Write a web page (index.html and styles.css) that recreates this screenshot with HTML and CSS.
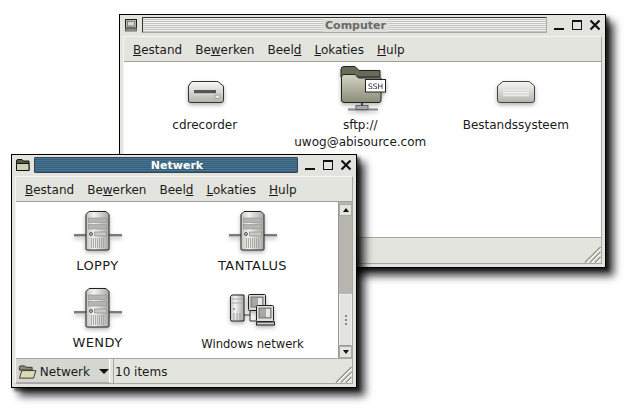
FILE: index.html
```html
<!DOCTYPE html>
<html>
<head>
<meta charset="utf-8">
<title>Nautilus</title>
<link rel="stylesheet" href="styles.css">
</head>
<body>
<svg class="defs" width="0" height="0">
  <defs>
    <linearGradient id="metal" x1="0" y1="0" x2="0" y2="1"><stop offset="0" stop-color="#f8f8f6"/><stop offset="1" stop-color="#b4b4ac"/></linearGradient>
    <linearGradient id="tower" x1="0" y1="0" x2="1" y2="0"><stop offset="0" stop-color="#c4c4c0"/><stop offset=".35" stop-color="#f2f2f0"/><stop offset="1" stop-color="#a8a8a4"/></linearGradient>
    <linearGradient id="folder" x1="0" y1="0" x2="0" y2="1"><stop offset="0" stop-color="#d4d4c4"/><stop offset="1" stop-color="#8c8c78"/></linearGradient>
    <symbol id="server" viewBox="0 0 48 48">
      <path d="M0 28H12M35 28H48" stroke="#555" stroke-width="1.500"/>
      <path d="M0 29.500H12M35 29.500H48" stroke="#bbb" stroke-width="1"/>
      <path d="M15 4.500H32L35 7.500V42Q35 43 34 43H13Q12 43 12 42V7.500Z" fill="url(#tower)" stroke="#222"/>
      <rect x="14.500" y="11" width="18" height="4.500" fill="#b4b4b0" stroke="#909090" stroke-width=".6"/>
      <rect x="14.500" y="17.500" width="18" height="4.500" fill="#b4b4b0" stroke="#909090" stroke-width=".6"/>
      <circle cx="17" cy="27" r="1.500" fill="#ccc" stroke="#333" stroke-width=".8"/>
      <rect x="20.500" y="25" width="12" height="4" fill="#c8c8c4" stroke="#808080" stroke-width=".6"/>
      <path d="M17.500 31V41M19.500 31V41M21.500 31V41M23.500 31V41M25.500 31V41M27.500 31V41M29.500 31V41" stroke="#a8a8a4"/>
    </symbol>
  </defs>
</svg>

<section class="window back">
  <header class="titlebar">
    <svg class="wm-icon" width="14" height="14" viewBox="0 0 14 14"><rect x="1.500" y="1.500" width="11" height="8.500" fill="#b8b8b0" stroke="#222"/><rect x="3.500" y="3.500" width="7" height="4.500" fill="#d8d8d0" stroke="#666" stroke-width=".7"/><rect x="1.500" y="11" width="11" height="2" fill="#bbb" stroke="#333" stroke-width=".7"/></svg>
    <div class="title plain"><span>Computer</span></div>
    <div class="wm-buttons">
      <svg width="12" height="12" viewBox="0 0 12 12"><rect x="1" y="9" width="10" height="2" fill="#111"/></svg>
      <svg width="12" height="12" viewBox="0 0 12 12"><rect x="1.500" y="1.500" width="9" height="9" fill="none" stroke="#111"/><rect x="1" y="1" width="10" height="2" fill="#111"/></svg>
      <svg width="12" height="12" viewBox="0 0 12 12"><path d="M1.500 1.500L10.500 10.500M10.500 1.500L1.500 10.500" stroke="#111" stroke-width="2.200"/></svg>
    </div>
  </header>
  <div class="frame">
    <nav class="menubar">
      <span><u>B</u>estand</span><span>Be<u>w</u>erken</span><span>Beel<u>d</u></span><span><u>L</u>okaties</span><span><u>H</u>ulp</span>
    </nav>
    <main class="canvas three">
      <figure class="item">
        <svg class="icon" width="48" height="48" viewBox="0 0 48 48"><path d="M10 17.500Q10 16.500 12 16.500H36Q38 16.500 38.500 18L42.500 21V35Q42.500 37.500 40 37.500H9Q7.500 37.500 7.500 35V21Z" fill="url(#metal)" stroke="#333"/><rect x="13" y="25" width="22" height="3.500" fill="#555"/><rect x="13" y="28.500" width="22" height="1" fill="#ddd"/><rect x="34" y="30" width="5" height="3.500" rx="1" fill="#e8e8e8" stroke="#777" stroke-width=".6"/></svg>
        <figcaption>cdrecorder</figcaption>
      </figure>
      <figure class="item">
        <svg class="icon" width="48" height="48" viewBox="0 0 48 48"><path d="M5 4.500Q5 1.500 8 1.500H19L23 5.500H44V12H5Z" fill="#6a6a58" stroke="#222"/><path d="M5.500 12Q5.500 9.500 8 9.500H19L22.500 13H45V35Q45 37.500 43 37.500H8Q5.500 37.500 5.500 35Z" fill="url(#folder)" stroke="#222"/><path d="M26 38V42" stroke="#444" stroke-width="2"/><path d="M12 44.500H42" stroke="#888" stroke-width="2"/><rect x="20" y="40.500" width="12" height="4" fill="#aaa" stroke="#444" stroke-width=".7"/><rect x="29.500" y="14.500" width="20" height="12.500" fill="#fff" stroke="#222"/><text x="39.500" y="23.800" class="ssh">SSH</text></svg>
        <figcaption>sftp://<br>uwog@abisource.com</figcaption>
      </figure>
      <figure class="item">
        <svg class="icon" width="48" height="48" viewBox="0 0 48 48"><path d="M11 16.500H37L42.500 21V35Q42.500 37.500 40 37.500H8Q5.500 37.500 5.500 35V21Z" fill="url(#metal)" stroke="#444"/><rect x="11" y="23.500" width="26" height="8" fill="#d8d8d4"/><path d="M11 25H37M11 27.500H37M11 30H37" stroke="#f4f4f2"/></svg>
        <figcaption>Bestandssysteem</figcaption>
      </figure>
    </main>
    <footer class="statusbar empty">
      <svg class="grip" width="17" height="17" viewBox="0 0 17 17"><path d="M1 16.500L16.500 1M6 16.500L16.500 6M11 16.500L16.500 11" stroke="#96968e" stroke-width="1.500"/><path d="M2.500 16.500L16.500 2.500M7.500 16.500L16.500 7.500M12.500 16.500L16.500 12.500" stroke="#fff"/></svg>
    </footer>
  </div>
</section>

<section class="window front">
  <header class="titlebar">
    <svg class="wm-icon" width="14" height="14" viewBox="0 0 14 14"><path d="M.5 3Q.5 1.500 2 1.500H6L7.500 3H13V12.500H.5Z" fill="#5a5a48" stroke="#111"/><path d="M.5 5.500H13V12.500H.5Z" fill="#cfcfb4" stroke="#111"/></svg>
    <div class="title active"><span>Netwerk</span></div>
    <div class="wm-buttons">
      <svg width="12" height="12" viewBox="0 0 12 12"><rect x="1" y="9" width="10" height="2" fill="#111"/></svg>
      <svg width="12" height="12" viewBox="0 0 12 12"><rect x="1.500" y="1.500" width="9" height="9" fill="none" stroke="#111"/><rect x="1" y="1" width="10" height="2" fill="#111"/></svg>
      <svg width="12" height="12" viewBox="0 0 12 12"><path d="M1.500 1.500L10.500 10.500M10.500 1.500L1.500 10.500" stroke="#111" stroke-width="2.200"/></svg>
    </div>
  </header>
  <div class="frame">
    <nav class="menubar">
      <span><u>B</u>estand</span><span>Be<u>w</u>erken</span><span>Beel<u>d</u></span><span><u>L</u>okaties</span><span><u>H</u>ulp</span>
    </nav>
    <div class="content-row">
      <main class="canvas two">
        <figure class="item"><svg class="icon" width="48" height="48"><use href="#server"/></svg><figcaption class="caps">LOPPY</figcaption></figure>
        <figure class="item"><svg class="icon" width="48" height="48"><use href="#server"/></svg><figcaption class="caps">TANTALUS</figcaption></figure>
        <figure class="item"><svg class="icon" width="48" height="48"><use href="#server"/></svg><figcaption class="caps">WENDY</figcaption></figure>
        <figure class="item">
          <svg class="icon" width="48" height="48" viewBox="0 0 48 48"><path d="M3 11H15V37H3Q1.500 37 1.500 35.500V12.500Z" fill="url(#tower)" stroke="#222"/><path d="M3 15H14M3 19H14" stroke="#aaa"/><circle cx="5" cy="25" r="1" fill="#888"/><path d="M5 29V36M8 29V36M11 29V36" stroke="#999"/><path d="M15 31H21M21 27V37H27" stroke="#333" fill="none"/><rect x="19.500" y="10.500" width="17" height="16" rx="1" fill="#d8d8d4" stroke="#222"/><rect x="22" y="13" width="12" height="10" fill="#a8a8a0" stroke="#555" stroke-width=".7"/><path d="M29 14H33V22H29Z" fill="#e8e8e8"/><rect x="27.500" y="21.500" width="17" height="16" rx="1" fill="#e0e0dc" stroke="#222"/><rect x="30" y="24" width="12" height="10" fill="#a8a8a0" stroke="#555" stroke-width=".7"/><path d="M37 25H41V33H37Z" fill="#e8e8e8"/><rect x="27.500" y="38" width="18" height="3" fill="#ccc" stroke="#222"/></svg>
          <figcaption class="wide">Windows netwerk</figcaption>
        </figure>
      </main>
      <aside class="scrollbar">
        <div class="sb-btn"><i class="arrow up"></i></div>
        <div class="sb-trough"></div>
        <div class="sb-thumb"><b></b><b></b><b></b></div>
        <div class="sb-btn"><i class="arrow down"></i></div>
      </aside>
    </div>
    <footer class="statusbar">
      <div class="combo">
        <svg width="20" height="16" viewBox="0 0 20 16"><path d="M1.500 3Q1.500 1.500 3 1.500H7L8.500 3H15V6H1.500Z" fill="#8a8a70" stroke="#333"/><path d="M1.500 14.500L4 6.500H19L16.500 14.500Z" fill="#dcdcb4" stroke="#333"/></svg>
        <span>Netwerk</span>
        <i class="arrow down big"></i>
      </div>
      <div class="count">10 items</div>
      <svg class="grip" width="17" height="17" viewBox="0 0 17 17"><path d="M1 16.500L16.500 1M6 16.500L16.500 6M11 16.500L16.500 11" stroke="#96968e" stroke-width="1.500"/><path d="M2.500 16.500L16.500 2.500M7.500 16.500L16.500 7.500M12.500 16.500L16.500 12.500" stroke="#fff"/></svg>
    </footer>
  </div>
</section>
</body>
</html>
```
FILE: styles.css
```css
* { box-sizing: border-box; }
html, body { margin: 0; height: 100%; overflow: hidden; background: #fff; }
body { position: relative; width: 627px; height: 411px; font: 12px/16px "DejaVu Sans", sans-serif; color: #1a1a1a; }
.defs { position: absolute; }
.window {
  position: absolute;
  display: flex;
  flex-direction: column;
  background: #e4e4df;
  border: 1px solid #000;
  box-shadow: 8px 8px 8px rgba(0, 0, 0, .75), 3px 3px 3px rgba(0, 0, 0, .6);
}
.back { left: 119px; top: 14px; width: 487px; height: 254px; }
.front { left: 11px; top: 154px; width: 346px; height: 234px; }
.titlebar { display: flex; align-items: center; height: 21px; padding: 2px 4px 3px 4px; flex: none; gap: 4px; }
.wm-icon { flex: none; }
.title { flex: 1; height: 16px; display: flex; align-items: center; justify-content: center; padding: 1px 0 0 22px; font-weight: bold; font-size: 11px; border: 1px solid; border-radius: 1px; }
.title.plain {
  color: #6a6a66;
  border-color: #333 #aaa #aaa #333;
  background: repeating-linear-gradient(to bottom, #f0f0ec 0, #f0f0ec 1px, #c4c4be 1px, #c4c4be 2px);
}
.title.plain span { background: #dcdcd8; padding: 0 2px; line-height: 13px; }
.title.active {
  color: #fff;
  border-color: #345;
  background: repeating-linear-gradient(to bottom, #4a7590 0, #4a7590 1px, #36607a 1px, #36607a 2px);
}
.wm-buttons { display: flex; gap: 6px; margin-left: 2px; flex: none; }
.frame { flex: 1; display: flex; flex-direction: column; margin: 0 3px 3px 3px; border: 1px solid #f4f4f2; border-right-color: #a8a8a2; border-bottom-color: #a8a8a2; min-height: 0; }
.menubar { display: flex; height: 25px; flex: none; align-items: center; padding: 1px 0 0 9px; gap: 13px; border-bottom: 1px solid #a0a09a; }
.menubar span { white-space: nowrap; }
.menubar u { text-underline-offset: 1px; }
.canvas { flex: 1; background: #fff; display: grid; align-content: start; min-height: 0; }
.canvas.three { grid-template-columns: repeat(3, 155.500px); padding: 3px 0 0 3px; }
.canvas.two { grid-template-columns: repeat(2, 155px); grid-auto-rows: 77px; padding: 5px 0 0 4px; }
.content-row { flex: 1; display: flex; min-height: 0; }
.item { margin: 0; display: flex; flex-direction: column; align-items: center; }
.icon { flex: none; overflow: visible; filter: drop-shadow(0 2px 2px rgba(0, 0, 0, .3)); }
.item figcaption { margin-top: 4px; text-align: center; line-height: 16.500px; white-space: nowrap; }
.item figcaption.caps { margin-top: 3px; font-size: 13px; letter-spacing: .4px; }
.item figcaption.wide { font-size: 11.600px; }
.ssh { font: 7.500px "DejaVu Sans", sans-serif; text-anchor: middle; fill: #222; }
.scrollbar { width: 14px; flex: none; display: flex; flex-direction: column; background: #b6b6ae; border-left: 1px solid #999; padding-top: 2px; }
.sb-btn { height: 12px; flex: none; background: #e4e4df; border: 1px solid #aaa; display: flex; align-items: center; justify-content: center; }
.sb-trough { flex: 1; }
.sb-thumb { height: 52px; flex: none; background: #e4e4df; border: 1px solid #eee; border-bottom-color: #999; display: flex; flex-direction: column; align-items: center; justify-content: center; gap: 2px; }
.sb-thumb b { width: 2px; height: 2px; background: #888; }
.arrow { display: block; width: 0; height: 0; border-left: 3px solid transparent; border-right: 3px solid transparent; }
.arrow.up { border-bottom: 4px solid #111; }
.arrow.down { border-top: 4px solid #111; }
.arrow.big { border-left-width: 5px; border-right-width: 5px; border-top-width: 5px; margin-left: 6px; }
.statusbar { position: relative; flex: none; display: flex; align-items: stretch; border-top: 1px solid #a8a8a2; }
.back .statusbar { height: 26px; }
.front .statusbar { height: 25px; }
.combo { width: 94px; display: flex; align-items: center; gap: 3px; padding: 2px 0 0 2px; background: #d6d6d0; border-right: 1px solid #fff; border-bottom: 1px solid #aaa; }
.count { margin-left: 3px; padding: 2px 0 0 1px; border-left: 1px solid #a8a8a2; display: flex; align-items: center; }
.grip { position: absolute; right: 0; bottom: 0; }
```
